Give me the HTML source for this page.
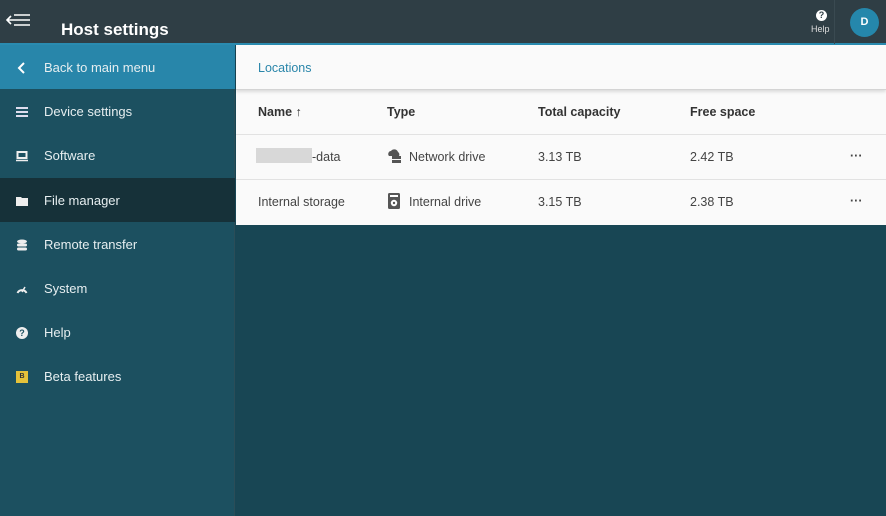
<!DOCTYPE html>
<html><head><style>
*{margin:0;padding:0;box-sizing:border-box}
body{width:886px;height:516px;overflow:hidden;background:#184654;font-family:"Liberation Sans","DejaVu Sans",sans-serif;position:relative}
.top{position:absolute;left:0;top:0;width:886px;height:45px;background:#2f3e45;border-bottom:2px solid #2a8bb0}
.title{position:absolute;left:61px;top:20px;color:#fff;font-weight:bold;font-size:17px}
.side{position:absolute;left:0;top:45px;width:235px;height:471px;background:#1c5060;border-right:1px solid #2a4d58}
.item{position:absolute;left:0;width:235px;height:44px;color:#e6eef0;font-size:13px;line-height:46px;padding-left:44px}
.ic{position:absolute;left:16px;top:17px;width:12px;height:12px}
.main{position:absolute;left:236px;top:45px;width:650px;height:180px;background:#fafafa}
.txt{position:absolute;font-size:12.5px;color:#444}
.hd{position:absolute;font-size:12.5px;color:#333;font-weight:bold}
.line{position:absolute;left:0;width:650px;height:1px;background:#e2e2e2}
</style></head><body>
<div class="top">
<svg style="position:absolute;left:6px;top:13px" width="26" height="16"><g stroke="#fff" stroke-width="1.6" fill="none"><path d="M8 2h16M8 7h16M8 12h16M1 7h8M5 3L1 7l4 4"/></g></svg>
<div class="title">Host settings</div>
<div style="position:absolute;left:834px;top:0;width:1px;height:44px;background:#3a4a51"></div>
<div style="position:absolute;left:816px;top:10px;width:11px;height:11px;border-radius:50%;background:#fff;color:#2f3e45;font-size:9px;font-weight:bold;text-align:center;line-height:11px">?</div>
<div style="position:absolute;left:811px;top:24px;color:#ddd;font-size:9px">Help</div>
<div style="position:absolute;left:850px;top:8px;width:29px;height:29px;border-radius:50%;background:#2587ab;color:#fff;font-size:11px;font-weight:bold;text-align:center;line-height:29px">D</div>
</div>
<div class="side">
<div class="item" style="top:0;background:#2886aa">
<svg class="ic" viewBox="0 0 12 12"><path d="M8 1L3 6l5 5" stroke="#fff" stroke-width="2" fill="none"/></svg>Back to main menu</div>
<div class="item" style="top:44px"><svg class="ic" viewBox="0 0 12 12"><path d="M0 2h12M0 6h12M0 10h12" stroke="#dde" stroke-width="2"/></svg>Device settings</div>
<div class="item" style="top:88px"><svg class="ic" viewBox="0 0 12 12"><rect x="1.5" y="2" width="9" height="6" fill="none" stroke="#eee" stroke-width="2"/><path d="M0 10.5h12" stroke="#eee" stroke-width="1.5"/></svg>Software</div>
<div class="item" style="top:133px;background:#163139"><svg class="ic" viewBox="0 0 12 12"><path d="M0 2h5l1 1h6v8H0z" fill="#eee"/></svg>File manager</div>
<div class="item" style="top:177px"><svg class="ic" viewBox="0 0 12 12"><ellipse cx="6" cy="2.5" rx="5" ry="2" fill="#eee"/><rect x="1" y="4.5" width="10" height="3" rx="1.5" fill="#eee"/><rect x="1" y="8.5" width="10" height="3" rx="1.5" fill="#eee"/></svg>Remote transfer</div>
<div class="item" style="top:221px"><svg class="ic" viewBox="0 0 12 12"><path d="M1.5 10A5 5 0 0 1 10.5 10" stroke="#eee" stroke-width="2" fill="none"/><path d="M6 9l3-5" stroke="#eee" stroke-width="1.5"/></svg>System</div>
<div class="item" style="top:265px"><div class="ic" style="border-radius:50%;background:#eee;color:#1c5060;font-size:9px;font-weight:bold;text-align:center;line-height:12px">?</div>Help</div>
<div class="item" style="top:309px"><div class="ic" style="background:#e5c23a;color:#333;font-size:7px;font-weight:bold;text-align:center;line-height:12px">B</div>Beta features</div>
</div>
<div class="main">
<div style="position:absolute;left:0;top:0;width:650px;height:45px;border-bottom:1px solid #d4d4d4;box-shadow:0 2px 3px rgba(0,0,0,.12)"></div>
<div class="txt" style="left:22px;top:16px;color:#2a86aa">Locations</div>
<div class="hd" style="left:22px;top:60px">Name ↑</div>
<div class="hd" style="left:151px;top:60px">Type</div>
<div class="hd" style="left:302px;top:60px">Total capacity</div>
<div class="hd" style="left:454px;top:60px">Free space</div>
<div class="line" style="top:89px"></div>
<div style="position:absolute;left:20px;top:103px;width:56px;height:15px;background:#d8d8d8"></div>
<div class="txt" style="left:76px;top:105px">-data</div>
<svg style="position:absolute;left:151px;top:103px" width="15" height="15"><path d="M2 8a3 3 0 0 1 2-5 4 4 0 0 1 7 1 3 3 0 0 1 1 4z" fill="#555"/><rect x="5" y="8" width="9" height="3" fill="#555"/><rect x="5" y="12" width="9" height="3" fill="#555"/></svg>
<div class="txt" style="left:173px;top:105px">Network drive</div>
<div class="txt" style="left:302px;top:105px">3.13 TB</div>
<div class="txt" style="left:454px;top:105px">2.42 TB</div>
<div class="txt" style="left:614px;top:104px;font-weight:bold">···</div>
<div class="line" style="top:134px"></div>
<div class="txt" style="left:22px;top:150px">Internal storage</div>
<svg style="position:absolute;left:151px;top:147px" width="14" height="18"><rect x="1" y="1" width="12" height="16" rx="1.5" fill="#555"/><circle cx="7" cy="11" r="3.2" fill="#fff"/><circle cx="7" cy="11" r="1.2" fill="#555"/><rect x="3" y="3" width="8" height="2" fill="#fff"/></svg>
<div class="txt" style="left:173px;top:150px">Internal drive</div>
<div class="txt" style="left:302px;top:150px">3.15 TB</div>
<div class="txt" style="left:454px;top:150px">2.38 TB</div>
<div class="txt" style="left:614px;top:149px;font-weight:bold">···</div>
</div>
</body></html>
